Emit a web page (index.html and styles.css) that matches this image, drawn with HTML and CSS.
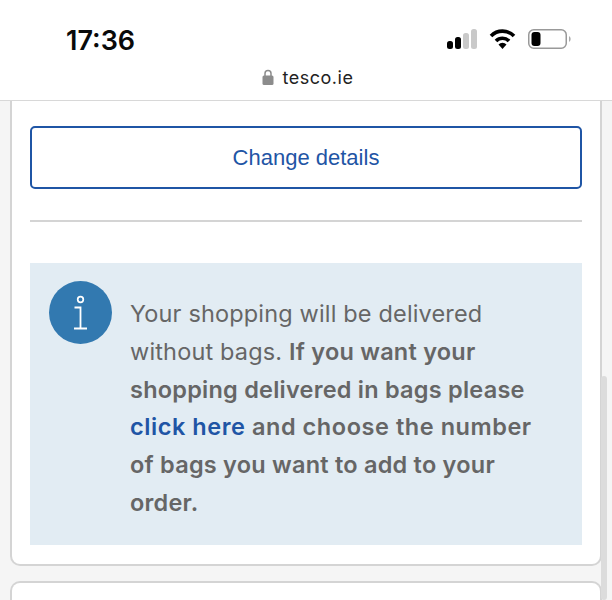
FILE: index.html
```html
<!DOCTYPE html>
<html lang="en">
<head>
<meta charset="utf-8">
<title>tesco.ie</title>
<link rel="stylesheet" href="styles.css">
</head>
<body>
<header class="browser-bar">
  <div class="status-row">
    <span class="clock">17:36</span>
    <div class="status-icons">
      <svg class="signal" width="30" height="20" viewBox="0 0 30 20"><rect x="0" y="12" width="6" height="8" rx="2.500" fill="#000"/><rect x="8" y="8" width="6" height="12" rx="2.500" fill="#000"/><rect x="16" y="4" width="6" height="16" rx="2.500" fill="#c9c9c9"/><rect x="24" y="0" width="6" height="20" rx="2.500" fill="#c9c9c9"/></svg>
      <svg class="wifi" width="27" height="20" viewBox="0 0 27 20"><path d="M2 7 A16 16 0 0 1 25 7" fill="none" stroke="#000" stroke-width="3.600"/><path d="M7 12 A9 9 0 0 1 20 12" fill="none" stroke="#000" stroke-width="3.600"/><path d="M9.500 15.500 L13.500 20 L17.500 15.500 A5.500 5.500 0 0 0 9.500 15.500 Z" fill="#000"/></svg>
      <svg class="battery" width="43" height="20" viewBox="0 0 43 20"><rect x="0.750" y="0.750" width="37.500" height="18.500" rx="5" fill="none" stroke="#999" stroke-width="1.500"/><rect x="3.500" y="3" width="9" height="14" rx="3" fill="#000"/><path d="M41 7 A3.500 3.500 0 0 1 41 13 Z" fill="#aaa"/></svg>
    </div>
  </div>
  <div class="url-row">
    <svg class="lock" width="12" height="16" viewBox="0 0 12 16"><path d="M3 7 V4.500 A3 3 0 0 1 9 4.500 V7" fill="none" stroke="#8c8c8c" stroke-width="1.500"/><rect x="0.500" y="6.500" width="11" height="9.500" rx="1.500" fill="#8c8c8c"/></svg>
    <span class="url">tesco.ie</span>
  </div>
</header>
<main class="page">
  <section class="card card-top">
    <a class="btn" href="#">Change details</a>
    <hr class="rule">
    <div class="notice">
      <svg class="info" width="63" height="63" viewBox="0 0 63 63"><circle cx="31.500" cy="31.500" r="31.500" fill="#3279b0"/><circle cx="31.500" cy="18.500" r="2.800" fill="none" stroke="#fff" stroke-width="1.700"/><path d="M25.500 26.500 H31.500 V47 M25 47.500 H38" fill="none" stroke="#fff" stroke-width="1.800"/></svg>
      <p class="notice-text">Your shopping will be delivered without bags. <b>If you want your shopping delivered in bags please <span class="wide"><a class="link" href="#">click here</a> and choose the number</span> of bags you want to add to your order.</b></p>
    </div>
  </section>
  <section class="card card-next"></section>
</main>
<div class="scroll-thumb"></div>
</body>
</html>
```
FILE: styles.css
```css
* { box-sizing: border-box; }
html, body { margin: 0; padding: 0; height: 600px; overflow: hidden; }
body { background: #f5f5f5; font-family: "Inter", "Liberation Sans", sans-serif; position: relative; }
.browser-bar { background: #fff; height: 101px; border-bottom: 1px solid #d8d8d8; }
.status-row { display: flex; justify-content: space-between; align-items: center; height: 66px; padding: 14px 41px 0 66px; }
.clock { font-size: 27px; font-weight: 600; color: #0a0a0a; }
.status-icons { display: flex; align-items: center; gap: 12px; margin-top: -2px; }
.url-row { display: flex; justify-content: center; align-items: center; gap: 9px; height: 22px; padding-left: 3px; }
.url { font-size: 18px; color: #222; letter-spacing: .5px; }
.page { padding: 0 10px; }
.card { background: #fff; border: 2px solid #d4d4d4; }
.card-top { border-top: 0; border-radius: 0 0 10px 10px; padding: 25px 18px 19px 18px; height: 465px; }
.card-next { margin-top: 15px; height: 19px; border-bottom: 0; border-radius: 10px 10px 0 0; }
.btn { display: flex; justify-content: center; align-items: center; height: 63px; border: 2px solid #1f55a5; border-radius: 5px; color: #1f55a5; text-decoration: none; font-family: "Liberation Sans", sans-serif; font-size: 22px; }
.rule { border: 0; border-top: 2px solid #d4d4d4; margin: 31px 0 41px; }
.notice { display: flex; align-items: flex-start; background: #e2ecf3; height: 282px; padding: 18px 30px 0 19px; gap: 18px; }
.info { flex: none; }
.notice-text { margin: 14px 0 0; font-size: 23.500px; line-height: 37.800px; color: #666; letter-spacing: .16px; }
.notice-text b { font-weight: 600; letter-spacing: .23px; }
.notice-text .wide { letter-spacing: .55px; }
.link { color: #1f55a5; text-decoration: none; }
.scroll-thumb { position: absolute; right: 5px; top: 376px; width: 6px; height: 224px; background: #dcdcdc; border-radius: 3px; }
```
